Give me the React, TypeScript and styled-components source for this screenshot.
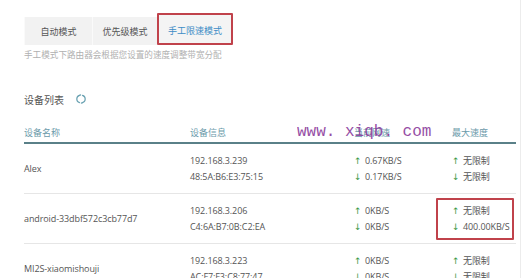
import React from "react";
import styled, { createGlobalStyle } from "styled-components";

const Global = createGlobalStyle`
  html, body { margin: 0; padding: 0; background: #ffffff; }
  body { font-family: "Open Sans", "Noto Sans CJK SC", sans-serif; color: #555; }
  * { box-sizing: border-box; }
`;

const Page = styled.div`
  position: relative;
  width: 521px;
  height: 278px;
  overflow: hidden;
  padding: 13px 0 0 24px;
  background: #fff;
  border-right: 1px solid #ececec;
`;

const TabBar = styled.div`
  display: flex;
  align-items: flex-end;
  height: 32px;
`;

const Tab = styled.div<{ $active?: boolean; $w: number }>`
  width: ${(p) => p.$w}px;
  height: ${(p) => (p.$active ? 32 : 28)}px;
  display: flex;
  align-items: center;
  justify-content: center;
  padding-top: ${(p) => (p.$active ? 2 : 0)}px;
  background: #f2f2f2;
  border-left: 1px solid ${(p) => (p.$active ? "transparent" : "#fafafa")};
  font-family: "Noto Sans CJK SC", sans-serif;
  font-size: 9px;
  color: ${(p) => (p.$active ? "#3d8cc6" : "#555")};
  ${(p) =>
    p.$active &&
    `border: 2px solid #c0424b; border-radius: 1px; background: #f4f4f4;`}
`;

const Hint = styled.div`
  margin-top: 2px;
  font-family: "Noto Sans CJK SC", sans-serif;
  font-size: 8.6px;
  line-height: 14px;
  color: #b0b0b0;
`;

const SectionTitle = styled.div`
  display: flex;
  align-items: center;
  gap: 12px;
  margin-top: 30px;
  height: 16px;
  font-family: "Noto Sans CJK SC", sans-serif;
  font-size: 10px;
  color: #555;
`;

const Table = styled.div`
  margin-top: 15px;
  width: 492px;
`;

const columns = "166px 164px 98px 1fr";

const HeaderRow = styled.div`
  display: grid;
  grid-template-columns: ${columns};
  align-items: center;
  height: 22px;
  border-bottom: 2px solid #5a8088;
  font-family: "Noto Sans CJK SC", sans-serif;
  font-size: 9px;
  color: #6b9aaa;
`;

const Row = styled.div`
  display: grid;
  grid-template-columns: ${columns};
  align-items: center;
  height: 50px;
  border-bottom: 1px solid #e6e6e6;
  font-size: 9px;
  letter-spacing: -0.1px;
  color: #555;
`;

const Cell = styled.div`
  position: relative;
  display: flex;
  flex-direction: column;
  justify-content: center;
  line-height: 16px;
  white-space: nowrap;
`;

const Line = styled.div`
  display: flex;
  align-items: center;
  gap: 6px;
  font-family: "Open Sans", "Noto Sans CJK SC", sans-serif;
`;

const Arrow = styled.span`
  color: #3c9a46;
  font-size: 9px;
  width: 5px;
  font-family: "DejaVu Sans", sans-serif;
`;

const Mark = styled.div`
  position: absolute;
  left: -16px;
  top: -5px;
  width: 78px;
  height: 42px;
  border: 2px solid #c0424b;
  border-radius: 1px;
`;

const Watermark = styled.div`
  position: absolute;
  left: 297px;
  top: 122px;
  font-family: "Liberation Mono", monospace;
  font-size: 16px;
  line-height: 20px;
  color: #8b3a9b;
  white-space: pre;
  opacity: 0.9;
`;

const Refresh = () => (
  <svg width="10" height="10" viewBox="0 0 12 12" fill="none" stroke="#6aa2b2" strokeWidth="1.4" strokeLinecap="round">
    <path d="M4.2 1.6 A4.6 4.6 0 0 0 4.2 10.4" />
    <path d="M7.8 10.4 A4.6 4.6 0 0 0 7.8 1.6" />
    <path d="M4.2 1.6 L5.6 1.1 M7.8 10.4 L6.4 10.9" />
  </svg>
);

type Dev = { name: string; ip: string; mac: string; up: string; down: string; maxUp: string; maxDown: string; mark?: boolean };

const devices: Dev[] = [
  { name: "Alex", ip: "192.168.3.239", mac: "48:5A:B6:E3:75:15", up: "0.67KB/S", down: "0.17KB/S", maxUp: "无限制", maxDown: "无限制" },
  { name: "android-33dbf572c3cb77d7", ip: "192.168.3.206", mac: "C4:6A:B7:0B:C2:EA", up: "0KB/S", down: "0KB/S", maxUp: "无限制", maxDown: "400.00KB/S", mark: true },
  { name: "MI2S-xiaomishouji", ip: "192.168.3.223", mac: "AC:F7:F3:C8:77:47", up: "0KB/S", down: "0KB/S", maxUp: "无限制", maxDown: "无限制" },
];

export default function App() {
  return (
    <Page>
      <Global />
      <TabBar>
        <Tab $w={68}>自动模式</Tab>
        <Tab $w={65}>优先级模式</Tab>
        <Tab $w={76} $active>手工限速模式</Tab>
      </TabBar>
      <Hint>手工模式下路由器会根据您设置的速度调整带宽分配</Hint>
      <SectionTitle>
        设备列表
        <Refresh />
      </SectionTitle>
      <Table>
        <HeaderRow>
          <div>设备名称</div>
          <div>设备信息</div>
          <div>当前网速</div>
          <div>最大速度</div>
        </HeaderRow>
        {devices.map((d) => (
          <Row key={d.name}>
            <Cell>{d.name}</Cell>
            <Cell>
              <Line>{d.ip}</Line>
              <Line>{d.mac}</Line>
            </Cell>
            <Cell>
              <Line><Arrow>↑</Arrow>{d.up}</Line>
              <Line><Arrow>↓</Arrow>{d.down}</Line>
            </Cell>
            <Cell>
              {d.mark && <Mark />}
              <Line><Arrow>↑</Arrow>{d.maxUp}</Line>
              <Line><Arrow>↓</Arrow>{d.maxDown}</Line>
            </Cell>
          </Row>
        ))}
      </Table>
      <Watermark>www. xiqb. com</Watermark>
    </Page>
  );
}
